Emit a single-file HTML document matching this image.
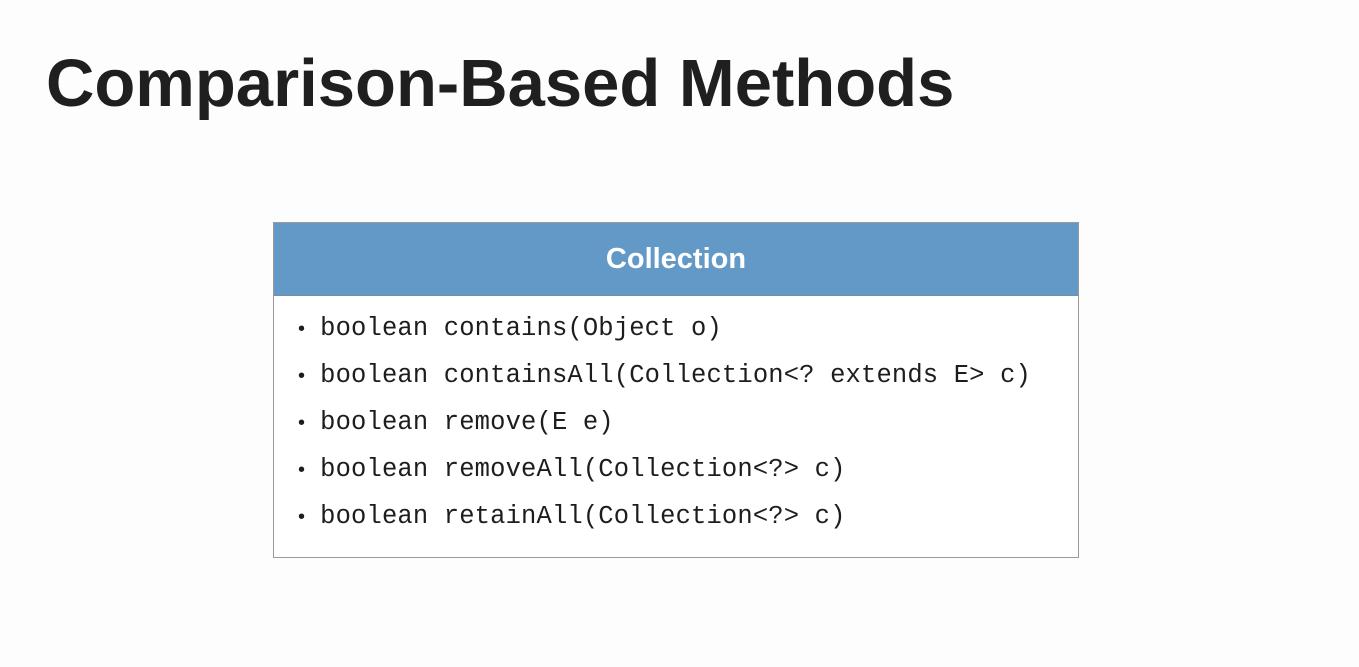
<!DOCTYPE html>
<html><head><style>
html,body{margin:0;padding:0;}
body{width:1359px;height:667px;background:#fdfdfd;position:relative;overflow:hidden;font-family:"Liberation Sans",sans-serif;}
h1{position:absolute;left:46px;top:44px;margin:0;font-size:67px;font-weight:bold;color:#1f1f1f;letter-spacing:0px;white-space:nowrap;line-height:80px;}
.box{position:absolute;left:273px;top:222px;width:804px;height:334px;border:1px solid #9a9a9a;background:#fff;}
.hd{height:72px;background:#6299c6;border-bottom:1px solid #7a8da0;color:#fff;font-weight:bold;font-size:29px;text-align:center;line-height:72px;}
ul{margin:0;padding:0;list-style:none;position:absolute;left:24px;top:91px;}
li{font-family:"Liberation Mono",monospace;font-size:25.5px;letter-spacing:0.15px;color:#1d1d1d;height:47px;line-height:30px;white-space:pre;}
li:before{content:"•";font-family:"Liberation Sans",sans-serif;margin-right:15px;font-size:20px;}
</style></head><body>
<h1>Comparison-Based Methods</h1>
<div class="box">
<div class="hd">Collection</div>
<ul>
<li>boolean contains(Object o)</li>
<li>boolean containsAll(Collection&lt;? extends E&gt; c)</li>
<li>boolean remove(E e)</li>
<li>boolean removeAll(Collection&lt;?&gt; c)</li>
<li>boolean retainAll(Collection&lt;?&gt; c)</li>
</ul>
</div>
</body></html>
